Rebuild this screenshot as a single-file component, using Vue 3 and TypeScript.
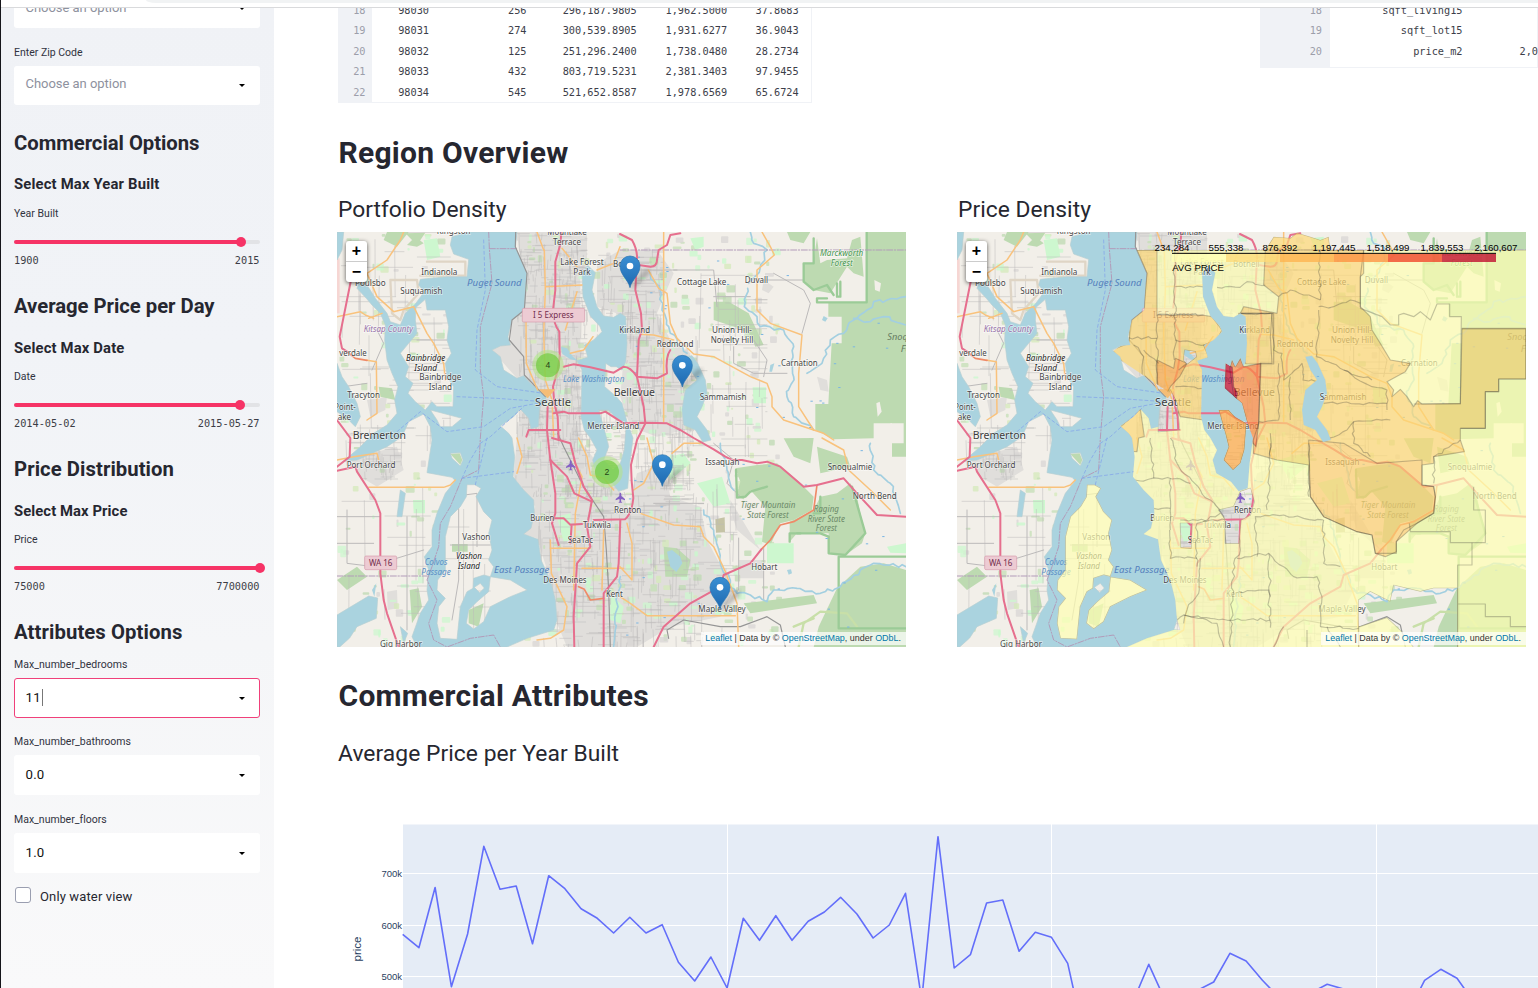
<script setup lang="ts">
type Pt = [number, number]

const SANS = '"Roboto", "Open Sans", sans-serif'
const ctx = document.createElement('canvas').getContext('2d')!

/* Letter spacing that gives a run of text the wanted advance width. */
function fit(text: string, width: number, size: number, weight = 400) {
  ctx.font = `${weight} ${size}px ${SANS}`
  const gap = (width - ctx.measureText(text).width) / text.length
  return { letterSpacing: `${gap.toFixed(3)}px` }
}

let seed = 11
function rnd() {
  seed = (seed * 16807) % 2147483647
  return seed / 2147483647
}

const sliders = [
  { h: 'Commercial Options', hw: 185.5, s: 'Select Max Year Built', sw: 145.5, l: 'Year Built', lw: 44.5, a: '1900', b: '2015', p: 92.2 },
  { h: 'Average Price per Day', hw: 200.5, s: 'Select Max Date', sw: 110.5, l: 'Date', lw: 21.5, a: '2014-05-02', b: '2015-05-27', p: 92 },
  { h: 'Price Distribution', hw: 160, s: 'Select Max Price', sw: 113.5, l: 'Price', lw: 23.5, a: '75000', b: '7700000', p: 100 },
]
const selects = [
  { l: 'Max_number_bedrooms', w: 113.5, v: '11', vw: 15.5, on: true },
  { l: 'Max_number_bathrooms', w: 117, v: '0.0', vw: 19, on: false },
  { l: 'Max_number_floors', w: 92.5, v: '1.0', vw: 19, on: false },
]
const rows = [
  ['18', '98030', '256', '296,187.9805', '1,962.5000', '37.8683'],
  ['19', '98031', '274', '300,539.8905', '1,931.6277', '36.9043'],
  ['20', '98032', '125', '251,296.2400', '1,738.0480', '28.2734'],
  ['21', '98033', '432', '803,719.5231', '2,381.3403', '97.9455'],
  ['22', '98034', '545', '521,652.8587', '1,978.6569', '65.6724'],
]
const attrs = [['18', 'sqft_living15', ''], ['19', 'sqft_lot15', ''], ['20', 'price_m2', '2,079.1']]
const maps = [{ title: 'Portfolio Density', w: 168.5, heat: false }, { title: 'Price Density', w: 133, heat: true }]

/* ---- base map geometry, three units to a pixel ---- */
const vashon = 'M390 764 413 764 432 775 417 800 440 845 465 870 455 910 465 960 455 990 470 1010 460 1040 520 1050 570 1080 520 1100 460 1130 440 1175 410 1197 388 1180 395 1140 420 1115 455 1085 460 1040 440 1035 410 1045 408 1075 390 1085 370 1130 360 1228 310 1225 300 1180 305 1130 325 1105 300 1080 302 1050 325 1020 325 920 340 860 370 830 388 800Z'
const water = [
  'M395 6 540 6 535 50 552 90 570 130 565 180 562 240 525 270 513 320 520 345 490 348 465 360 490 380 500 420 540 445 560 437 580 460 602 478 628 500 622 520 608 530 604 590 582 596 575 565 550 537 530 560 490 588 515 610 525 624 533 680 528 740 560 780 590 810 592 850 582 895 560 912 603 928 612 990 640 1050 655 1110 660 1170 650 1200 570 1225 510 1251 240 1251 225 1220 250 1150 275 1110 270 1080 275 1020 262 980 285 950 285 900 300 850 325 790 355 752 345 742 270 728 285 630 280 590 260 552 215 575 195 620 150 650 60 690 20 694 70 650 110 610 150 585 180 550 173 510 183 470 165 430 150 390 143 330 145 285 130 250 105 225 88 205 60 175 65 160 90 165 115 205 150 250 160 275 190 285 205 250 235 222 262 185 245 165 250 148 330 140 390 140 395 88 350 72 340 45 345 20Z',
  'M237 232 265 208 270 240 295 240 325 240 335 290 330 330 343 370 325 400 330 440 350 470 348 530 300 530 285 515 265 540 235 515 213 490 228 460 205 440 215 410 190 370 215 340 240 310 235 270Z',
  'M280 540 375 565 345 590 310 590 300 570Z M340 670 370 668 378 690 370 708 345 685Z',
  vashon,
  'M412 1072 430 1060 442 1074 428 1088Z',
  'M0 400 15 440 35 470 60 520 70 560 55 590 30 565 0 545Z M0 6 20 6 15 60 0 90Z M0 1155 95 1098 122 1104 118 1165 60 1190 38 1224 8 1251 0 1251Z M190 780 205 790 195 860 180 860Z M190 1190 212 1210 200 1240Z',
  'M735 130 752 106 775 128 765 180 780 230 800 258 830 262 850 250 866 260 870 340 866 395 855 420 838 410 822 410 806 400 803 470 838 500 855 520 870 575 888 624 878 700 872 775 845 784 822 755 778 730 767 690 780 660 760 624 742 600 732 560 735 420 720 392 752 382 742 345 770 330 795 305 788 288 760 258 738 200Z M785 540 815 540 835 562 868 580 862 660 850 700 828 720 800 690 815 650 805 610Z',
  'M1045 380 1065 377 1082 400 1105 450 1110 490 1095 530 1080 560 1110 600 1122 630 1098 636 1075 600 1040 585 1035 540 1045 480 1080 450 1060 420Z',
].join(' ')
const ponds = 'M672 350 690 355 708 380 722 392 700 388 676 372Z M990 965 1005 960 1030 980 1036 1000 1018 1026 1000 1010Z M1460 258 1472 265 1465 275 1455 270Z M1350 1020 1362 1018 1365 1030 1355 1034Z M1300 405 1312 400 1305 425 1297 425Z M105 1080 118 1060 112 1100Z'

const urban = [
  'M540 6H750V110L730 140 730 560 735 640 860 800 900 900V1251H690L660 1180 640 1050 600 925 560 912 595 830 530 740 540 620 550 537 620 510 540 445 465 360 520 330 525 270 565 230Z',
  'M780 100 850 60 960 60 1010 130 960 250 1000 330 1060 370 1040 600 960 620 880 590 850 500 870 260 780 230Z',
  'M900 730 980 700 1000 800 1090 830 1110 930 1190 1080 1150 1160 1000 1190 900 1251H860V900Z',
  'M1180 810 1270 960 1200 900 1180 840Z M1205 990H1280V1045H1205Z M1280 150 1310 170 1295 190 1275 180Z M1440 440 1470 450 1475 485 1450 480Z M1470 810 1490 820 1485 850 1470 845Z M40 685 180 650 200 720 120 770 70 740Z M90 510 150 500 145 540 100 560Z M150 1085 180 1080 182 1135 152 1140Z',
]
const forest = [
  'M1589 6H1707V680H1665V580H1610V625L1490 628 1435 600V522H1474L1484 340H1514V260H1474V217H1589Z',
  'M1440 25 1450 100 1470 90 1530 85 1545 30 1570 20 1580 140 1550 130 1530 110 1480 190 1430 180 1400 155V102H1428Z',
  'M1195 715 1260 705 1320 700 1380 750 1430 800 1425 840 1370 870 1330 880 1300 945 1275 935 1285 830 1240 780 1220 808 1197 800 1210 755Z',
  'M1450 800 1500 790 1540 760 1560 800 1570 850 1585 910 1575 940 1525 975 1475 970V910H1380L1358 935V875L1430 840Z',
  'M1430 1251 1445 1190 1500 1075 1570 1010 1640 1000 1707 1020V1251Z',
  'M1130 215H1175L1235 250 1280 345 1255 350 1240 315 1205 295 1130 270Z M980 950 1020 955 1060 990 1050 1040 985 1040Z',
  'M1350 6H1420L1400 40 1360 30Z M1340 625 1430 624 1420 700 1370 680Z M1440 650 1530 680 1540 710 1450 730Z M1220 1120 1430 1095 1440 1120 1240 1150Z',
  'M150 6H215L180 50 140 30Z M235 20 260 40 240 50 210 45Z M125 470 165 475 175 510 130 500Z M218 1080 245 1075 255 1130 225 1180Z M345 942H392V965H345Z M340 672 368 670 376 690 370 704Z M395 1140 440 1120 425 1190 395 1180Z M0 1050 60 1010 90 1040 30 1080Z M205 10 265 8 240 45Z',
]
const parks = [
  'M1060 25 1100 20 1100 50 1075 60Z M1247 472H1287V520H1250Z M1080 760 1155 740 1180 820 1130 830Z M960 690 1040 670 1060 700 1000 750Z M1290 940H1370V1000H1290Z M228 810H264V850H230Z M260 30 300 25 310 80 270 90Z M1650 950 1707 940V970L1660 968Z M660 860 700 850 705 930 680 935Z M820 1090 860 1130 850 1180 820 1170Z',
]
const outlines = [
  'M1589 6V217H1440V205H1470M1500 160V200H1510V155', 'M1400 103V155L1430 180 1470 165 1490 195', 'M1197 720 1200 803 1225 800 1240 785 1290 770', 'M1380 910H1450L1475 920V970L1525 975 1585 910 1545 770', 'M1505 980H1707M1505 980V1195H1707', 'M1430 25V100H1400', 'M1358 935V910H1390', 'M1450 800V850H1430',
]
const motorways = [
  'M672 6Q672 40 668 50L655 95 655 180 648 240Q650 285 667 305L668 380 662 420 648 470 652 520 662 560 665 630',
  'M632 530 630 600 640 690 655 790 655 850 645 880 665 945', 'M575 600H670M575 600 568 620', 'M645 624 700 640 715 700 740 770 765 810 750 890 760 950 720 1000 715 1080 710 1160 712 1251',
  'M640 690 690 740 712 790 765 815', 'M850 870 845 1000 840 1040 800 1090V1251', 'M849 12 885 30Q902 60 900 90L895 180 912 250 915 300 905 330 900 440 920 530 925 580 900 630 882 704 884 754 889 804Q885 850 864 868L770 870M735 882 700 884 680 865 650 865M704 884 700 940',
  'M680 410 710 403 760 412 830 428 860 410Q880 410 900 440L960 445 990 430Q985 380 1000 360', 'M650 550 680 545 695 550 790 550 805 545 860 580 925 578 990 580 1030 600 1070 624 1130 658 1165 680 1185 690 1215 690 1260 700 1290 695 1330 710 1400 770 1440 765 1520 745 1560 790 1620 855 1707 860',
  'M1273 958 1240 1000 1160 1035 1150 1070 1060 1120 980 1190 950 1251', 'M905 105 940 110Q960 110 960 90L965 60 990 45 1000 15 1030 10', 'M0 722 55 710 60 725 115 810 130 850 130 1030 140 1110 150 1150 185 1251', 'M42 150 8 320 15 355 30 365', 'M0 570 40 624 38 680 0 710',
]
const trunks = ['M1440 765 1430 840 1370 875 1330 885 1300 930 1273 958', 'M30 365 55 385 90 391', 'M725 1070 742 1078 760 1110 800 1105']
const oranges = [
  'M200 6 190 30 150 90 90 130 120 200 170 245 230 230 270 310 290 340 320 400 325 450', 'M0 260 70 245 85 255 110 265M95 265 135 250', 'M90 391 118 395 120 550 90 570', 'M95 772H320L340 765 355 750M0 690 50 680 120 670 125 690',
  'M622 60 625 180 620 310 625 450 645 510 650 620M625 170 735 165M720 185 685 300M675 55 720 110M567 270 568 400 602 480M768 320 740 360 700 370M620 60 600 6',
  'M934 120 965 175 990 190 1000 280 1020 325 1070 372 1130 380 1240 440 1290 460 1305 500 1305 530 1340 570 1430 600 1460 610 1490 630', 'M1275 6 1300 50 1312 75 1260 120 1260 240 1300 280 1395 315 1385 430 1385 530 1430 600', 'M980 6V575M910 313 950 315 1010 330',
  'M910 850 1010 885 1090 890 1100 920 1130 950 1165 1025 1200 1120 1205 1251', 'M849 1100 880 1120 930 1157 1195 1157M870 880 885 940 885 1050 849 1010M640 930 643 1030 690 1130 680 1200 640 1225 600 1230', 'M710 690 735 740 715 850 710 1080M640 955H760M735 1015H860M800 900 795 1080', 'M725 624 750 680 760 735 800 745 830 780M540 624 555 680 540 730M849 50 830 100 780 120M930 624 950 700 920 760 890 780M1005 670 1040 640 1090 640', 'M1455 624 1520 660 1535 720 1600 780 1660 840',
]
const rivers = ['1232,175 1222,230 1260,260 1270,290 1340,300 1370,350 1360,400 1370,440 1350,500 1370,560 1430,600', '1410,430 1455,400 1480,330 1520,310 1550,270 1590,240 1610,215 1650,210 1707,200', '1550,265 1600,275 1640,260 1707,285', '1175,1060 1200,1090 1240,1095 1290,1115 1310,1080 1380,1075 1450,1090 1510,1070 1570,1020 1610,1000 1640,1005 1707,1010', '940,130 970,180 975,240 1000,310 1050,370', '1150,640 1170,720 1190,780', '1600,640 1610,720 1660,760 1690,850', '850,1040 840,1120 830,1251', '1100,840 1130,900 1150,1000 1180,1060', '1240,6 1250,40 1290,60 1270,110 1235,160']
const ferries = ['M440 30 445 180 420 300 415 420 480 470 620 490', 'M360 500 480 505 620 515', 'M180 605 250 545 330 605 440 590 520 535 610 518', 'M375 745 400 690 430 640 460 620 560 530', 'M375 745 530 725M415 764 450 624']
const bounds = ['M455 6 457 55 465 160 430 290 430 420 440 500 430 624 425 720 375 745 340 830 310 880 305 950 285 1010 270 1050 300 1110 275 1180 290 1230 330 1251 400 1225 470 1215 490 1251', 'M457 56H540M849 60H1707M0 1038H270']
const rails = ['M536 6 535 50 570 130 562 240 525 270 517 330 560 380 562 435 625 500', 'M662 610 680 650 740 770 800 860 808 960 815 1080 820 1251', 'M995 1225 990 1200 1040 1170 1150 1190 1210 1190 1290 1160 1330 1185 1345 1251']

const streets = (() => {
  let d = ''
  const zone = (x: number, y: number, w: number, h: number, step: number) => {
    const n = Math.round((w * h) / (step * step * 2.2))
    for (let i = 0; i < n; i++) {
      const px = Math.round(x + rnd() * w)
      const py = Math.round(y + rnd() * h)
      const len = Math.round(step * (1 + rnd() * 4))
      const bend = Math.round((rnd() - 0.5) * 12)
      d += rnd() > 0.5
        ? `M${px} ${py}h${Math.min(len, Math.round(x + w - px))}`
        : `M${px} ${py}l${bend / 2} ${Math.min(len, Math.round(y + h - py))}`
    }
  }
  zone(540, 6, 210, 560, 12)
  zone(535, 530, 350, 270, 13)
  zone(600, 790, 500, 460, 18)
  zone(780, 60, 200, 340, 15)
  zone(870, 380, 200, 400, 16)
  zone(1000, 120, 290, 560, 40)
  zone(0, 6, 340, 700, 38)
  zone(0, 760, 280, 490, 60)
  zone(300, 800, 160, 400, 60)
  zone(60, 650, 130, 100, 14)
  zone(1080, 700, 120, 520, 34)
  return d
})()

const specks = Array.from({ length: 620 }, (_, i) => {
  const east = i % 5 !== 0
  const x = east ? 560 + rnd() * 760 : rnd() * 330
  const y = 10 + rnd() * 1230
  return { x, y, w: 5 + rnd() * 22, h: 5 + rnd() * 18, c: ['#c4dfb6', '#cdf7cf', '#d4e9b9', '#d8d6d4', '#c8facc', '#bddab1'][i % 6] }
})
const pools = Array.from({ length: 60 }, () => ({ x: 860 + rnd() * 830, y: 20 + rnd() * 1200 }))

type Label = [string, number, number, number, string?]
const labels: Label[] = [
  ['Kingston', 350, 12, 102], ['Indianola', 307, 134, 108], ['Suquamish', 253, 191, 126], ['Poulsbo', 100, 167, 92], ['Kitsap County', 154, 305, 148, 'county'],
  ['verdale', 48, 378, 82], ['Bainbridge', 266, 393, 118, 'isle'], ['Island', 266, 422, 68, 'isle'], ['Bainbridge', 310, 450, 126], ['Island', 310, 480, 70], ['Tracyton', 80, 503, 98],
  ['Point-', 24, 540, 64], ['ake', 22, 570, 40], ['Bremerton', 127, 626, 160, 'city'], ['Puget Sound', 472, 168, 164, 'sea'], ['Mountlake', 690, 15, 118], ['Terrace', 690, 46, 84],
  ['Lake Forest', 735, 106, 130], ['Park', 735, 136, 52], ['Bothell', 868, 112, 80], ['Lake Washington', 770, 457, 184, 'water'], ['Seattle', 648, 527, 108, 'city'], ['Kirkland', 893, 308, 92], ['Bellevue', 892, 497, 124, 'city'], ['Mercer Island', 829, 596, 156],
  ['Cottage Lake', 1094, 166, 148], ['Duvall', 1258, 158, 70], ['Marckworth', 1514, 78, 130, 'wood'], ['Forest', 1514, 108, 66, 'wood'], ['Union Hill-', 1185, 310, 120], ['Novelty Hill', 1185, 340, 128], ['Redmond', 1014, 352, 110], ['Carnation', 1387, 409, 110], ['Sammamish', 1158, 511, 140],
  ['Snoqualmie', 1724, 331, 146, 'range'], ['Forest', 1732, 366, 82, 'range'], ['Port Orchard', 102, 714, 146], ['Vashon', 418, 931, 84], ['Vashon', 396, 987, 78, 'isle'], ['Island', 396, 1016, 66, 'isle'], ['Colvos', 297, 1006, 68, 'water'], ['Passage', 297, 1036, 88, 'water'], ['East Passage', 554, 1028, 166, 'sea'], ['Gig Harbor', 192, 1251, 126],
  ['Burien', 616, 874, 72], ['Tukwila', 780, 893, 84], ['SeaTac', 730, 940, 76], ['Des Moines', 684, 1060, 130], ['Kent', 832, 1102, 50], ['Renton', 872, 848, 82], ['Issaquah', 1156, 705, 102], ['Snoqualmie', 1539, 721, 134], ['North Bend', 1613, 806, 132],
  ['Tiger Mountain', 1293, 834, 164, 'grove'], ['State Forest', 1293, 863, 124, 'grove'], ['Raging', 1468, 847, 76, 'grove'], ['River State', 1468, 875, 112, 'grove'], ['Forest', 1468, 904, 64, 'grove'], ['Hobart', 1282, 1020, 78], ['Maple Valley', 1155, 1146, 142],
]
const planes: Pt[] = [[701, 706], [850, 803]]
const pins: Pt[] = [[879, 173], [1036, 471], [976, 769], [1149, 1137]]
const clusters = [{ x: 633, y: 406, n: 4 }, { x: 810, y: 726, n: 2 }]

/* ---- choropleth ---- */
const county = 'M540 60H925L950 20 1000 24 1020 8 1060 20 1090 30 1115 20 1120 60H1707V1251H500V1200L670 1200 600 960 540 900 590 840 520 740V620L480 590 550 530 600 560 640 490 460 370 515 330 515 270 555 240Z'
const gaps = 'M785 840 830 830 850 785 880 775 892 815 880 855 852 870 845 940H805V868Z M670 880 705 880 702 955 672 952Z M683 360 715 365 718 380 690 402 680 390Z M1205 1110 1240 1085 1300 1115 1310 1066 1390 1085 1430 1075 1500 1075V1251H1370L1330 1200 1290 1162 1205 1190Z M604 530 622 520 640 480 660 520 668 600 604 605Z'
const zones: [string, string][] = [
  ['#fed976', 'M540 60H600V255H735L765 260 795 300 780 330 740 345 755 380 740 400V570L670 560 640 490 600 475 565 440 540 445 465 360 515 340 520 270 560 240 570 130Z'],
  ['#fed976', 'M550 537 562 620 545 624 540 665 525 664 520 620 490 590Z'],
  ['#fed976', 'M925 60 950 20 1000 24 1020 8 1060 20 1090 30 1115 20 1120 60H1220L1220 130 1210 140V230L1240 260 1245 300 1270 340 1300 390 1360 400 1345 425 1290 455 1310 480 1305 500 1330 478 1350 500 1370 530 1382 512 1395 522 1510 520 1515 295H1707V447H1625V485H1585V595H1510V630L1522 665 1430 680V700L1395 705 1395 765 1430 770 1435 800 1430 850 1380 880 1340 900 1318 935V965L1285 980 1255 970 1245 915 1200 905 1100 860 1060 800 1055 705 960 690 889 670 889 630 905 580 910 400 945 400 940 320 945 250H850L860 230 960 250 965 200 920 165Z'],
  ['#fed976', 'M845 250H950V402H866Z'],
  ['#fed070', 'M1055 630 1160 640 1260 700 1395 690V765L1430 770 1435 800 1430 850 1380 880 1318 935V970L1255 970 1245 915 1200 905 1100 860 1060 800Z'],
  ['#fdab48', 'M600 390 650 415 655 385 690 400 668 440 640 470 630 490 600 470Z'],
  ['#fea843', 'M785 540 815 540 835 562 868 580 862 660 850 700 828 720 800 690 815 650 805 610Z'],
  ['#fd8b42', 'M818 415 825 390 835 410 850 385 860 410 912 400 905 580 897 650 888 640 870 575 855 520 830 500Z'],
  ['#bd0026', 'M806 400 826 412 830 470 842 490 838 506 803 475Z'],
]
function rough(d: string, amp = 9) {
  const p = d.split(' ').map((s) => s.split(',').map(Number) as Pt)
  let out = `M${p[0]}`
  for (let i = 1; i < p.length; i++) {
    const [ax, ay] = p[i - 1]
    const [bx, by] = p[i]
    const n = Math.max(1, Math.round(Math.hypot(bx - ax, by - ay) / 14))
    for (let k = 1; k <= n; k++) {
      const j = k === n ? 0 : 1
      out += `L${(ax + ((bx - ax) * k) / n + (rnd() - 0.5) * amp * j).toFixed(1)} ${(ay + ((by - ay) * k) / n + (rnd() - 0.5) * amp * j).toFixed(1)}`
    }
  }
  return out
}
const riverPaths = rivers.map((r) => rough(r, 12))
const borders = [
  '655,60 652,170 655,300 652,390', '655,170 750,172', '600,255 655,255 740,255', '515,323 600,325', '655,330 745,345', '600,255 600,475', '530,345 560,380 555,440', '690,400 665,420', '655,470 735,475', '560,360 605,400', '780,172 849,172 870,155 925,165', '850,250 940,250', '965,200 1000,180 1040,195 1090,210', '1090,60 1085,100 1090,210', '1085,230 1130,230 1180,210 1210,220', '1085,240 1078,380 1160,420 1245,450', '945,250 950,360 975,370 980,450 1035,400 1038,450 1078,455', '965,400 965,570 905,575', '1000,440 1000,570', '1100,520 1290,520', '1160,420 1245,470 1290,480 1290,540', '1190,575 1300,570', '1190,575 1190,640 1240,680', '1110,630 1170,600 1190,575', '940,610 940,680', '1055,640 1055,800', '1510,630 1430,680 1430,760',
  '533,750 660,745 700,760', '640,624 660,700 730,780 800,850', '640,745 640,900', '590,835 640,835', '670,870 805,870', '638,900 640,985 720,985', '730,985 725,1090 690,1140 680,1180', '940,640 940,700 930,840', '900,980 895,860 980,855 1040,865 1100,870', '840,985 935,970 940,1100', '935,970 980,1010 1010,1040 1080,1040 1095,1100 1090,1190', '845,1085 935,1080 940,1193', '680,1155 760,1165 940,1170', '840,860 850,960 830,1000 820,1251', '1100,870 1100,1000 1150,1010', '640,1195 680,1155 780,1180 800,1251', '1090,1190 1205,1195', '980,1190 950,1251', '1110,1190 1150,1251', '580,624 590,745', '720,1010 720,880 790,850',
].map((b) => rough(b))
const straight = ['M1515 297H1707V447H1625V485H1585V595H1510M1370 522H1510L1513 260H1478V222H1440L1420 270 1390 245 1370 260 1340 250 1325 255V285H1300L1275 260 1210 235V140L1220 60', 'M1357 880 1360 905H1480V938H1585V840H1550V770', 'M1545 938V1005H1502V1251M1502 1122H1585V1160H1660V1190H1707', 'M1205 1190V1251M1050 1251V1200']
const ticks = ['234,284', '555,338', '876,392', '1,197,445', '1,518,499', '1,839,553', '2,160,607']
const ramp = ['#ffffb2', '#fed976', '#feb24c', '#fd8d3c', '#f03b20', '#bd0026']

const ys = [934.3, 947.7, 887.5, 986.7, 934, 846.3, 889.3, 886, 943.7, 875.7, 888.7, 908.7, 918.3, 933, 917.3, 933, 924.7, 962.3, 981, 957, 988, 918.3, 940.3, 915.7, 940.3, 921.3, 912, 897.3, 914, 938, 925, 893.3, 1000, 836.7, 968, 954.7, 903, 900, 951.3, 932.3, 937.3, 963.3, 1036, 1030, 1030, 1002.7, 964.3, 1000, 1000, 990.3, 982, 953.3, 961, 980.3, 997, 1004, 992.7, 984.3, 989, 1000, 1010, 1020, 1012.7, 980.3, 969.3, 978.3, 1001]
const line = ys.map((y, i) => `${(402.7 + i * 16.22).toFixed(1)},${y}`).join(' ')
</script>

<template>
  <div class="page">
    <div class="chrome"><div class="omnibox"></div></div>
    <div class="body">
      <aside>
        <div class="select first"><span class="ph" :style="fit('Choose an option', 101, 13)">Choose an option</span><i class="caret"></i></div>
        <p class="label zip"><span :style="fit('Enter Zip Code', 68.5, 10.5)">Enter Zip Code</span></p>
        <div class="select zipbox"><span class="ph" :style="fit('Choose an option', 101, 13)">Choose an option</span><i class="caret"></i></div>
        <section v-for="s in sliders" :key="s.h">
          <h2><span :style="fit(s.h, s.hw, 20.3, 700)">{{ s.h }}</span></h2>
          <h3><span :style="fit(s.s, s.sw, 14.8, 700)">{{ s.s }}</span></h3>
          <p class="label"><span :style="fit(s.l, s.lw, 10.5)">{{ s.l }}</span></p>
          <div class="track"><div class="fill" :style="{ width: s.p + '%' }"><b></b></div></div>
          <div class="ends"><span>{{ s.a }}</span><span>{{ s.b }}</span></div>
        </section>
        <h2><span :style="fit('Attributes Options', 168.5, 20.3, 700)">Attributes Options</span></h2>
        <div v-for="s in selects" :key="s.l" class="field">
          <p class="label"><span :style="fit(s.l, s.w, 10.5)">{{ s.l }}</span></p>
          <div class="select" :class="{ on: s.on }"><span :style="fit(s.v, s.vw, 13.2)">{{ s.v }}</span><em v-if="s.on"></em><i class="caret"></i></div>
        </div>
        <div class="check"><div class="box"></div><span :style="fit('Only water view', 92.5, 13)">Only water view</span></div>
      </aside>

      <main>
        <div class="tables">
          <div class="grid left">
            <div v-for="r in rows" :key="r[0]" class="tr"><span v-for="(c, i) in r" :key="i">{{ c }}</span></div>
          </div>
          <div class="grid right">
            <div v-for="r in attrs" :key="r[0]" class="tr"><span v-for="(c, i) in r" :key="i">{{ c }}</span></div>
          </div>
        </div>
        <h1><span :style="fit('Region Overview', 230, 30, 700)">Region Overview</span></h1>
        <div class="maps">
          <div v-for="m in maps" :key="m.title" class="mapcol">
            <h4><span :style="fit(m.title, m.w, 22.8)">{{ m.title }}</span></h4>
            <div class="map">
              <svg viewBox="0 6 1707 1245" width="569" height="415">
                <defs>
                  <linearGradient id="pin" x1="0" y1="0" x2="0" y2="1"><stop offset="0" stop-color="#3a8fd3" /><stop offset="1" stop-color="#1d69b0" /></linearGradient>
                  <filter id="soft"><feGaussianBlur stdDeviation="6" /></filter>
                  <mask id="land" maskUnits="userSpaceOnUse" x="0" y="0" width="1707" height="1260">
                    <path :d="county" fill="#fff" /><path :d="water" fill="#000" fill-rule="evenodd" /><path :d="vashon" fill="#fff" /><path :d="gaps" fill="#000" />
                    <path d="M785 540 815 540 835 562 868 580 862 660 850 700 828 720 800 690 815 650 805 610Z M818 415 825 388 835 410 850 383 860 410 900 400V560L870 575 855 520 838 506 803 475 806 400Z" fill="#fff" />
                  </mask>
                </defs>
                <rect y="6" width="1707" height="1245" fill="#f2efe9" />
                <path v-for="d in urban" :key="d" :d="d" fill="#e0dedb" />
                <rect v-for="(s, i) in specks" :key="i" :x="s.x" :y="s.y" :width="s.w" :height="s.h" rx="3" :fill="s.c" opacity=".75" />
                <path v-for="d in forest" :key="d" :d="d" fill="#bddab1" />
                <path d="M1385 1251 1400 1180 1450 1145 1530 1150 1560 1190M1370 1190 1430 1165" class="ln" stroke="#c8dfa8" stroke-width="7" />
                <path d="M1375 780 1390 778M1535 170 1555 150M1612 150 1632 160 1628 185 1614 180ZM1618 520 1628 515 1634 545 1622 560ZM1660 580H1700V640H1660Z" fill="#f2efe9" />
                <path d="M1135 868 1163 862 1164 907 1137 908Z" fill="#c5c3a5" />
                <path v-for="d in parks" :key="d" :d="d" fill="#cdf7cf" />
                <path :d="streets" class="ln" stroke="#bdbbbb" stroke-width="2" opacity=".75" />
                <path d="M1250 330 1290 390 1280 440M1190 350V400L1250 430 1350 430M1310 130 1400 180 1420 220 1395 310M1010 120H1130L1140 230M1130 200H1240M1130 640 1190 690 1170 760 1210 800M880 120H1020M1205 924V1080M1280 950V1110M950 820H1100M1250 150 1400 150M0 860H130M30 840V1000L110 1010M210 860V1200M0 940H110M130 1000 260 960M345 800 420 790 420 950M365 830V1050L345 1170M340 945H460M20 470 90 460M120 300 140 340 105 420M240 330H330" class="ln" stroke="#bcbaba" stroke-width="3" />
                <path d="M160 150H240L245 190 200 240 190 270 165 250ZM270 95H385V137H250" class="ln" stroke="#dfd5c5" stroke-width="7" />
                <path d="M0 85H8V250H0" fill="#f6d6d3" />
                <path :d="water" fill="#aad3df" fill-rule="evenodd" stroke="#b7cfd2" stroke-width="2" />
                <path :d="ponds" fill="#aad3df" />
                <path v-for="d in outlines" :key="d" :d="d" class="ln" stroke="#9bcb97" stroke-width="7" />
                <path v-for="d in riverPaths" :key="d" :d="d" class="ln" stroke="#a3cfe0" stroke-width="5" />
                <rect v-for="(p, i) in pools" :key="i" :x="p.x" :y="p.y" width="7" height="3" fill="#79b5e3" />
                <path v-for="d in bounds" :key="d" :d="d" class="ln" stroke="#b29bb9" stroke-width="3" stroke-dasharray="18 5 4 5" />
                <path v-for="d in ferries" :key="d" :d="d" class="ln" stroke="#8db0e8" stroke-width="3" stroke-dasharray="9 8" />
                <path v-for="d in rails" :key="d" :d="d" class="ln" stroke="#959595" stroke-width="3.5" />
                <path v-for="d in oranges" :key="d" :d="d" class="ln" stroke="#f9c27c" stroke-width="4.5" />
                <path v-for="d in trunks" :key="d" :d="d" class="ln" stroke="#ef8a68" stroke-width="5" />
                <path v-for="d in motorways" :key="d" :d="d" class="ln" stroke="#e66f8e" stroke-width="6" />
                <path d="M605 478H655L632 505Z" fill="#f5bd76" />
                <g class="shield"><rect x="556" y="235" width="187" height="41" rx="4" /><text x="649" y="263" textLength="122">I 5 Express</text></g>
                <g class="shield"><rect x="83" y="978" width="96" height="41" rx="4" /><text x="131" y="1008" textLength="70">WA 16</text></g>
                <path v-for="p in planes" :key="p[0]" :transform="`translate(${p[0]} ${p[1]})`" d="M0-15C3-15 3-9 3-5L14 4V8L3 4 2 11 6 15H-6L-2 11-3 4-14 8V4L-3-5C-3-9-3-15 0-15Z" fill="#8461c4" />
                <text v-for="(l, i) in labels" :key="i" :x="l[1]" :y="l[2]" :textLength="l[3]" lengthAdjust="spacingAndGlyphs" class="lb" :class="l[4]">{{ l[0] }}</text>

                <template v-if="m.heat">
                  <g mask="url(#land)">
                    <g opacity=".7"><rect width="1707" height="1251" fill="#ffffb2" /><path v-for="z in zones" :key="z[1]" :d="z[1]" :fill="z[0]" /></g>
                    <path v-for="z in zones" :key="z[1]" :d="z[1]" class="edge" />
                    <path v-for="b in borders" :key="b" :d="b" class="edge" />
                    <path v-for="b in straight" :key="b" :d="b" class="edge" />
                    <path d="M540 60H1707" class="edge" /><path :d="vashon" class="edge" /><path :d="gaps" class="edge" />
                  </g>
                  <g class="legend">
                    <rect v-for="(c, i) in ramp" :key="c" :x="645 + i * 162" y="71" width="162" height="25" :fill="c" opacity=".75" />
                    <path d="M645 70H1617" stroke="#000" stroke-width="3" />
                    <text v-for="(t, i) in ticks" :key="t" :x="645 + i * 162" y="62" :textLength="t.length > 7 ? 129 : 105" lengthAdjust="spacingAndGlyphs">{{ t }}</text>
                    <text x="723" y="122" textLength="155" lengthAdjust="spacingAndGlyphs">AVG PRICE</text>
                  </g>
                </template>
                <template v-else>
                  <g v-for="c in clusters" :key="c.n" class="cluster"><circle :cx="c.x" :cy="c.y" r="47" fill="#b5e28c" opacity=".6" /><circle :cx="c.x" :cy="c.y" r="36" fill="#6ecc39" opacity=".68" /><text :x="c.x" :y="c.y + 9">{{ c.n }}</text></g>
                  <g v-for="p in pins" :key="p[0]" :transform="`translate(${p[0]} ${p[1]})`">
                    <path d="M0 0 40-50Q65-65 58-40L12 0Z" fill="#333" opacity=".3" filter="url(#soft)" />
                    <path d="M0 0C-5-24-30-38-30-65A30 30 0 0 1 30-65C30-38 5-24 0 0Z" fill="url(#pin)" stroke="#2671ae" stroke-width="2" />
                    <circle cy="-65" r="10" fill="#fff" />
                  </g>
                </template>
              </svg>
              <div class="zoom"><span>+</span><span>−</span></div>
              <div class="attr"><a>Leaflet</a> | Data by © <a>OpenStreetMap</a>, under <a>ODbL</a>.</div>
            </div>
          </div>
        </div>
        <h1 class="second"><span :style="fit('Commercial Attributes', 310.5, 30, 700)">Commercial Attributes</span></h1>
        <h4 class="avg"><span :style="fit('Average Price per Year Built', 281, 22.8)">Average Price per Year Built</span></h4>
        <svg class="chart" viewBox="337 800 1201 188" width="1201" height="188">
          <rect x="403" y="824.5" width="1140" height="170" fill="#e5ecf6" />
          <path d="M403 873.5H1538M403 925.5H1538M403 976.5H1538M727.5 824V988M1051.5 824V988M1376.5 824V988" stroke="#fff" stroke-width="1" />
          <polyline :points="line" fill="none" stroke="#636efa" stroke-width="1.6" stroke-linejoin="round" />
          <g class="axis"><text x="402" y="877">700k</text><text x="402" y="929">600k</text><text x="402" y="980">500k</text></g>
          <text class="ytitle" transform="translate(361 949) rotate(-90)" textLength="25" lengthAdjust="spacingAndGlyphs">price</text>
        </svg>
      </main>
    </div>
  </div>
</template>

<style>
html, body { margin: 0; background: #fff; overflow: hidden; }
</style>

<style scoped>
* { box-sizing: border-box; }
.page { width: 1538px; height: 988px; overflow: hidden; border-left: 1px solid #15151a; background: #fff; color: #262730; font-family: "Roboto", "Open Sans", sans-serif; white-space: nowrap; }
.chrome { height: 8px; border-bottom: 1px solid #d9dadc; overflow: hidden; }
.omnibox { margin-left: 145px; height: 3px; background: #f1f3f4; border-bottom-left-radius: 10px 3px; }
.body { display: flex; height: 980px; }
aside { width: 273px; flex: none; padding: 0 14px 0 13px; overflow: hidden; background: linear-gradient(#f0f2f6, #f1f3f7 35%, #f5f6f8 65%, #f9f9fa); }
h1, h2, h3, h4, p { margin: 0; font-weight: 700; display: flex; align-items: center; }
h2 { height: 26px; font-size: 20.3px; }
h3 { height: 20px; margin-top: 18px; font-size: 14.8px; }
.label { height: 16px; font-size: 10.5px; font-weight: 400; margin-top: 11px; color: #31333f; }
.select { width: 246px; height: 39px; display: flex; align-items: center; padding: 0 15px 1px 11.5px; background: #fff; border-radius: 3px; font-size: 13.2px; color: #111; }
.ph { font-size: 13px; color: #8e919e; margin-top: -2px; }
.select.first { margin-top: -19px; }
.zip { margin-top: 16px; }
.zipbox { margin: 5.5px 0 25.5px; }
.caret { margin: 1px 0.5px 0 auto; border: 3px solid transparent; border-top: 3.5px solid #000; border-bottom: 0; }
section { height: 163px; }
section + section h3 { margin-top: 18.5px; }
section .label { margin-top: 11px; }
section + section .label { margin-top: 10.5px; }
.track { height: 4px; margin-top: 19px; border-radius: 2px; background: #e2e3e6; }
.fill { height: 4px; border-radius: 2px; background: #f63366; display: flex; justify-content: flex-end; align-items: center; }
.fill b { flex: none; width: 10px; height: 10px; margin-right: -5px; border-radius: 50%; background: #f63366; }
.ends { display: flex; justify-content: space-between; margin-top: 8.5px; height: 14px; padding-right: 0.5px; font: 10.25px/14px "DejaVu Sans Mono", monospace; color: #3c3d46; }
.field .label { margin-top: 15px; margin-bottom: 6px; }
h2 + .field .label { margin-top: 11px; margin-bottom: 6px; }
.field .select { height: 40px; }
.field:nth-last-child(2) .label { margin-top: 16px; }
.select.on { border: 1px solid #f0407a; padding-left: 10.5px; padding-right: 14px; }
.select em { width: 1px; height: 17px; margin-left: 1px; background: #777; }
.check { display: flex; align-items: center; margin-top: 15.5px; height: 16px; font-size: 13px; }
.box { width: 16px; height: 16px; margin: -3px 9px 0 1px; border: 1px solid #9a9eb0; border-radius: 3px; background: #fff; }
main { width: 1264px; flex: none; padding-left: 63px; }
.tables { display: flex; justify-content: space-between; height: 95px; overflow: hidden; }
.grid { border: 1px solid #f0f2f6; border-top: 0; font: 10.25px/20.4px "DejaVu Sans Mono", monospace; color: #3c3e49; }
.grid.left { width: 474px; height: 95px; margin-left: 1px; background: linear-gradient(90deg, #f0f2f6 33px, #fff 33px); }
.grid.right { width: 278px; height: 60px; background: linear-gradient(90deg, #f0f2f6 69px, #fff 69px); }
.tr { display: grid; height: 20.4px; text-align: right; }
.tr:first-child { margin-top: -8px; }
.tr span:first-child { color: #9c9eaa; }
.left .tr { grid-template-columns: 26.5px 63.5px 97.5px 110.2px 90.5px 71.5px; }
.right .tr { grid-template-columns: 61px 140.5px 100px; }
.right .tr span:last-child { text-align: left; padding-left: 57px; }
h1 { height: 36px; margin: 31px 0 0 1.5px; font-size: 30px; }
.maps { display: flex; gap: 51px; margin-top: 25px; }
h4 { height: 28px; margin: 0 0 0 1px; font-size: 22.8px; font-weight: 400; }
.map { position: relative; width: 569px; height: 415px; margin-top: 9px; overflow: hidden; }
.map svg { display: block; }
.ln { fill: none; stroke-linejoin: round; stroke-linecap: round; }
.edge { fill: none; stroke: #333; stroke-opacity: .28; stroke-width: 3.5; stroke-linejoin: round; }
.lb { font: 25px "Noto Sans", sans-serif; fill: #464646; text-anchor: middle; stroke: #fff; stroke-opacity: .6; stroke-width: 4px; paint-order: stroke; }
.lb.city { font-size: 33px; fill: #3c3c3c; }
.lb.isle { font-style: italic; fill: #222; }
.lb.county { font-style: italic; fill: #9872a8; }
.lb.sea { font-size: 28px; font-style: italic; fill: #5580bd; stroke: none; }
.lb.water { font-style: italic; fill: #5a8fc6; stroke: none; }
.lb.wood { font-style: italic; fill: #43934d; }
.lb.range { font-size: 29px; font-style: italic; fill: #667a61; stroke: none; }
.lb.grove { font-style: italic; fill: #6b8968; stroke: none; }
.shield rect { fill: #edcbd3; stroke: #d79cac; stroke-width: 2; }
.shield text { font: 24px "Noto Sans", sans-serif; fill: #722c4c; text-anchor: middle; }
.cluster text { font: 26px "Liberation Sans", sans-serif; text-anchor: middle; fill: #244215; }
.legend text { font: 26px "Liberation Sans", sans-serif; text-anchor: middle; }
.zoom { position: absolute; left: 9px; top: 9px; width: 21px; height: 41px; border-radius: 3px; background: #fff; box-shadow: 0 1px 4px rgba(0, 0, 0, .65); font: bold 16px/20px "Liberation Sans", sans-serif; text-align: center; color: #000; }
.zoom span { display: block; height: 21px; }
.zoom span:first-child { border-bottom: 1px solid #ccc; }
.attr { position: absolute; right: 0; bottom: 2px; height: 13px; padding: 0 5px 0 4px; background: rgba(255, 255, 255, .7); font: 8.95px/13px "Liberation Sans", sans-serif; color: #333; }
.attr a { color: #0078a8; }
h1.second { margin-top: 30px; }
.avg { margin-top: 26px; }
.chart { display: block; margin: 33px 0 0 0; }
.axis text { font: 9.5px "Liberation Sans", sans-serif; fill: #2a3f5f; text-anchor: end; }
.ytitle { font: 10.5px "Liberation Sans", sans-serif; fill: #2a3f5f; text-anchor: middle; }
</style>
